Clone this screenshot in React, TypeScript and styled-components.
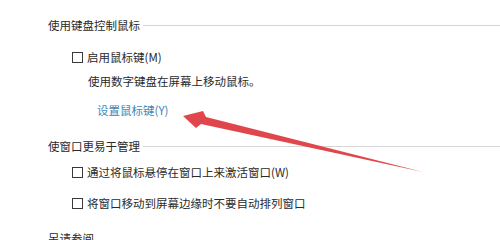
import styled, { createGlobalStyle } from "styled-components";

const GlobalStyle = createGlobalStyle`
  html, body {
    margin: 0;
    padding: 0;
    background: #ffffff;
  }
  body {
    font-family: "Noto Sans CJK SC", "Noto Sans", sans-serif;
  }
`;

const Page = styled.div`
  position: relative;
  width: 500px;
  height: 240px;
  overflow: hidden;
  padding-left: 48px;
  box-sizing: border-box;
  display: flex;
  flex-direction: column;
  color: #2a2a2a;
  font-size: 11.5px;
  line-height: 16px;
`;

const Header = styled.div<{ $top: number }>`
  display: flex;
  align-items: center;
  margin-top: ${({ $top }) => $top}px;
  height: 16px;
  color: #2a2a2a;
`;

const HeaderLine = styled.div`
  flex: 1;
  height: 1px;
  margin-left: 3px;
  background: #d6d6d6;
`;

const Row = styled.div<{ $top: number; $indent: number }>`
  display: flex;
  align-items: center;
  height: 16px;
  margin-top: ${({ $top }) => $top}px;
  padding-left: ${({ $indent }) => $indent}px;
`;

const Box = styled.span`
  width: 11px;
  height: 11px;
  border: 1px solid #3a3a3a;
  box-sizing: border-box;
  margin-right: 4px;
  background: #fff;
`;

const Link = styled.span`
  color: #3f86b9;
`;

const Arrow = styled.svg`
  position: absolute;
  left: 0;
  top: 0;
  pointer-events: none;
`;

const CheckRow = ({ top, label }: { top: number; label: string }) => (
  <Row $top={top} $indent={24}>
    <Box />
    <span>{label}</span>
  </Row>
);

const App = () => {
  return (
    <>
      <GlobalStyle />
      <Page>
        <Header $top={17}>
          使用键盘控制鼠标
          <HeaderLine />
        </Header>
        <CheckRow top={16} label="启用鼠标键(M)" />
        <Row $top={8} $indent={40}>
          使用数字键盘在屏幕上移动鼠标。
        </Row>
        <Row $top={13} $indent={49}>
          <Link>设置鼠标键(Y)</Link>
        </Row>
        <Header $top={20}>
          使窗口更易于管理
          <HeaderLine />
        </Header>
        <CheckRow top={10} label="通过将鼠标悬停在窗口上来激活窗口(W)" />
        <CheckRow top={15} label="将窗口移动到屏幕边缘时不要自动排列窗口" />
        <Header $top={19}>另请参阅</Header>
        <Arrow width="500" height="240" viewBox="0 0 500 240">
          <polygon
            points="183,116 203,111 206,117 423,172 201,124 196,128"
            fill="#e0474c"
          />
        </Arrow>
      </Page>
    </>
  );
};

export default App;
